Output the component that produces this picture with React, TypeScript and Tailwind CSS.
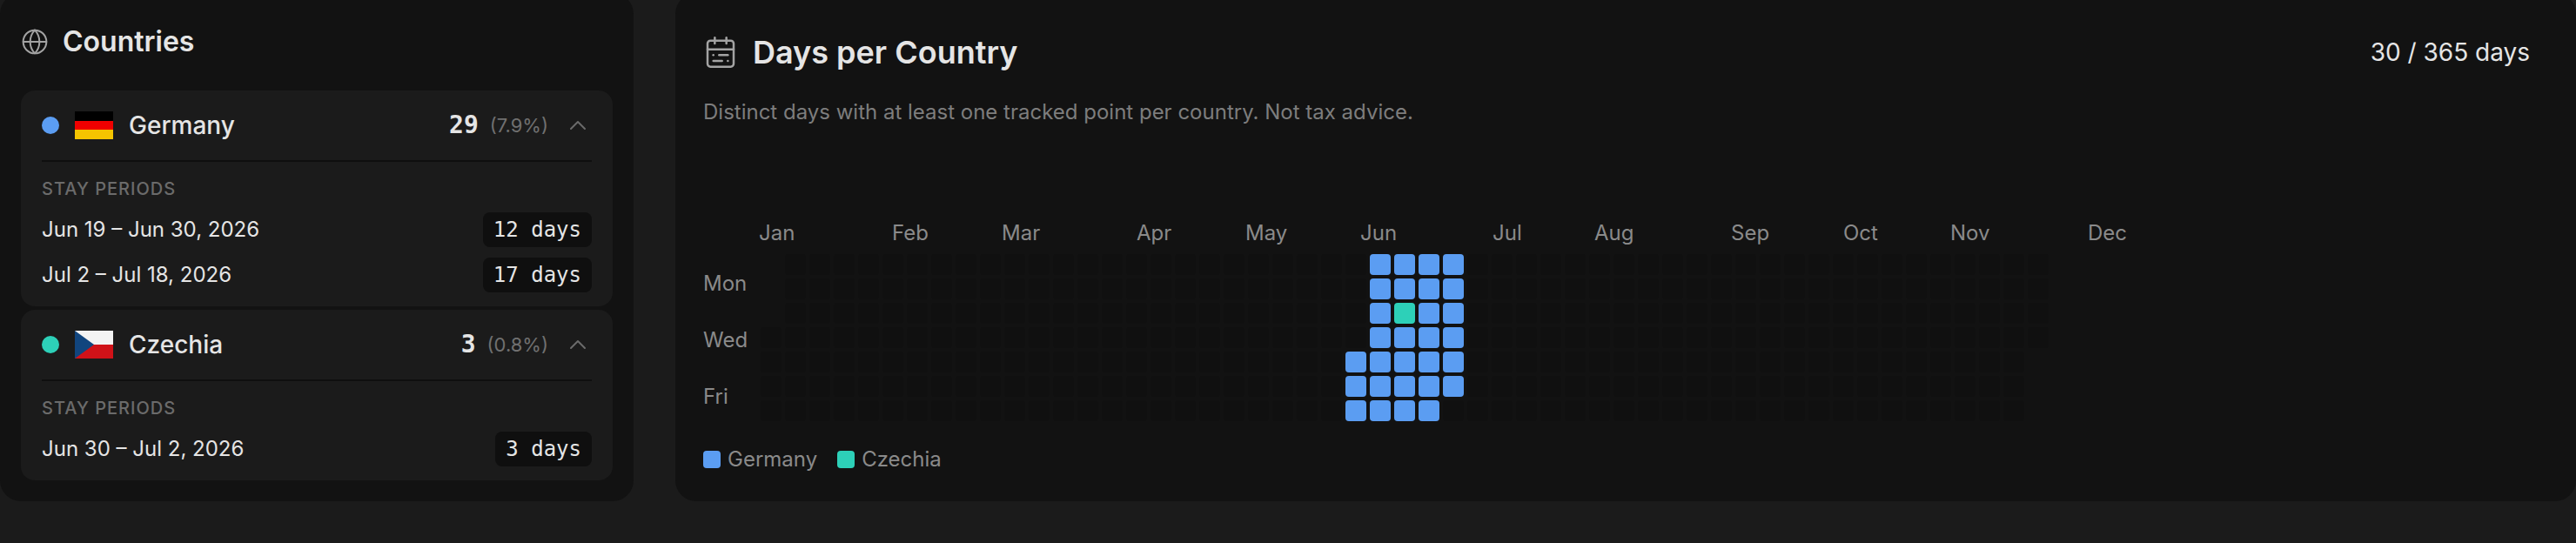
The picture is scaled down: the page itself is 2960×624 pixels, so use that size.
import React from "react";
import { Globe, CalendarRange, ChevronUp } from "lucide-react";

const BLUE = "#5b9df2";
const TEAL = "#2dd0b8";

function dayColor(col: number, row: number): string | null {
  const idx = (col - 24) * 7 + row; // days from Mon Jun 15, 2026
  if (col === 26 && row === 2) return TEAL;
  if (idx >= 4 && idx <= 33) return BLUE;
  return null;
}

const cells: { key: string; color: string | null; hidden: boolean }[] = [];
for (let c = 0; c < 53; c++) {
  for (let r = 0; r < 7; r++) {
    const hidden = (c === 0 && r < 3) || (c === 52 && r > 3);
    cells.push({ key: `${c}-${r}`, color: dayColor(c, r), hidden });
  }
}

const months: [string, number][] = [
  ["Jan", 153],
  ["Feb", 126],
  ["Mar", 155],
  ["Apr", 125],
  ["May", 132],
  ["Jun", 152],
  ["Jul", 117],
  ["Aug", 157],
  ["Sep", 129],
  ["Oct", 123],
  ["Nov", 158],
  ["Dec", 60],
];

function FlagDE() {
  return (
    <svg width="44" height="32" viewBox="0 0 44 32" className="block shrink-0">
      <rect width="44" height="11" fill="#000" />
      <rect y="11" width="44" height="11" fill="#f00000" />
      <rect y="21" width="44" height="11" fill="#f5c400" />
    </svg>
  );
}

function FlagCZ() {
  return (
    <svg width="44" height="32" viewBox="0 0 44 32" className="block shrink-0">
      <rect width="44" height="16" fill="#f3f3f3" />
      <rect y="16" width="44" height="16" fill="#d01218" />
      <path d="M0 0L22 16L0 32Z" fill="#11457e" />
    </svg>
  );
}

function Period({ range, days }: { range: string; days: string }) {
  return (
    <div className="flex h-10 items-center justify-between">
      <span className="text-2xl text-[#e5e5e5]">{range}</span>
      <span className="flex h-10 items-center rounded-lg bg-[#0f0f0f] px-3 font-['DejaVu_Sans_Mono'] text-2xl text-[#e5e5e5]">
        {days}
      </span>
    </div>
  );
}

function CountryCard({
  dot,
  flag,
  name,
  count,
  pct,
  periods,
}: {
  dot: string;
  flag: React.ReactNode;
  name: string;
  count: string;
  pct: string;
  periods: [string, string][];
}) {
  return (
    <div className="rounded-2xl bg-[#1b1b1b] px-6 pb-4">
      <div className="flex h-[82px] items-center border-b-2 border-[#0f0f0f]">
        <span className="h-5 w-5 rounded-full" style={{ backgroundColor: dot }} />
        <span className="ml-[18px]">{flag}</span>
        <span className="ml-[18px] flex-1 text-[28px] font-medium text-[#e5e5e5]">{name}</span>
        <span className="font-['DejaVu_Sans_Mono'] text-[28px] font-bold text-[#e5e5e5]">{count}</span>
        <span className="ml-[13px] text-[22px] text-[#707070]">{pct}</span>
        <ChevronUp size={32} strokeWidth={1.5} className="ml-[18px] text-[#6b6b6b]" />
      </div>
      <div className="pt-[15px]">
        <div className="mb-[11px] h-8 text-xl leading-8 font-medium tracking-[0.05em] text-[#6b6b6b] uppercase">
          Stay periods
        </div>
        <div className="flex flex-col gap-3">
          {periods.map(([r, d]) => (
            <Period key={r} range={r} days={d} />
          ))}
        </div>
      </div>
    </div>
  );
}

export default function App() {
  return (
    <div className="h-[624px] w-[2960px] overflow-hidden bg-[#1b1b1b] font-['Inter',sans-serif]">
      <div className="-mt-2 flex h-[584px] gap-12">
        <section className="flex w-[728px] shrink-0 flex-col rounded-3xl bg-[#121212] px-6 pt-[36px]">
          <div className="flex h-10 items-center">
            <Globe size={32} strokeWidth={1.5} className="text-[#a3a3a3]" />
            <h2 className="ml-[16px] text-[32px] font-semibold text-[#e5e5e5]">Countries</h2>
          </div>
          <div className="mt-[36px] flex flex-col gap-1">
            <CountryCard
              dot={BLUE}
              flag={<FlagDE />}
              name="Germany"
              count="29"
              pct="(7.9%)"
              periods={[
                ["Jun 19 – Jun 30, 2026", "12 days"],
                ["Jul 2 – Jul 18, 2026", "17 days"],
              ]}
            />
            <CountryCard
              dot={TEAL}
              flag={<FlagCZ />}
              name="Czechia"
              count="3"
              pct="(0.8%)"
              periods={[["Jun 30 – Jul 2, 2026", "3 days"]]}
            />
          </div>
        </section>

        <section className="flex flex-1 flex-col rounded-3xl bg-[#121212] px-8 pt-[44px]">
          <div className="flex h-12 items-center justify-between pr-[21px]">
            <div className="flex items-center">
              <CalendarRange size={40} strokeWidth={1.5} className="text-[#a3a3a3]" />
              <h2 className="ml-[17px] text-4xl font-semibold text-[#e5e5e5]">Days per Country</h2>
            </div>
            <span className="text-[28px] text-[#e5e5e5]">30 / 365 days</span>
          </div>
          <p className="mt-[29px] text-2xl leading-8 text-[#7d7d7d]">
            Distinct days with at least one tracked point per country. Not tax advice.
          </p>
          <div className="mt-[107px] flex h-8 items-center pl-[64px]">
            {months.map(([m, w]) => (
              <span key={m} className="shrink-0 text-2xl text-[#8a8a8a]" style={{ width: w }}>
                {m}
              </span>
            ))}
          </div>
          <div className="mt-2 flex">
            <div className="flex h-[192px] w-[66px] flex-col pt-[16px] text-2xl leading-9 text-[#8a8a8a]">
              <span className="mb-[29px]">Mon</span>
              <span className="mb-[29px]">Wed</span>
              <span>Fri</span>
            </div>
            <div className="grid grid-flow-col grid-cols-[repeat(53,24px)] grid-rows-[repeat(7,24px)] gap-1">
              {cells.map((c) => (
                <div
                  key={c.key}
                  className={c.hidden || c.color ? "rounded" : "rounded bg-[#101010]"}
                  style={c.color ? { backgroundColor: c.color } : undefined}
                />
              ))}
            </div>
          </div>
          <div className="mt-[28px] flex items-center">
            <span className="h-5 w-5 rounded" style={{ backgroundColor: BLUE }} />
            <span className="ml-2 text-2xl text-[#8a8a8a]">Germany</span>
            <span className="ml-[23px] h-5 w-5 rounded" style={{ backgroundColor: TEAL }} />
            <span className="ml-2 text-2xl text-[#8a8a8a]">Czechia</span>
          </div>
        </section>
      </div>
    </div>
  );
}
